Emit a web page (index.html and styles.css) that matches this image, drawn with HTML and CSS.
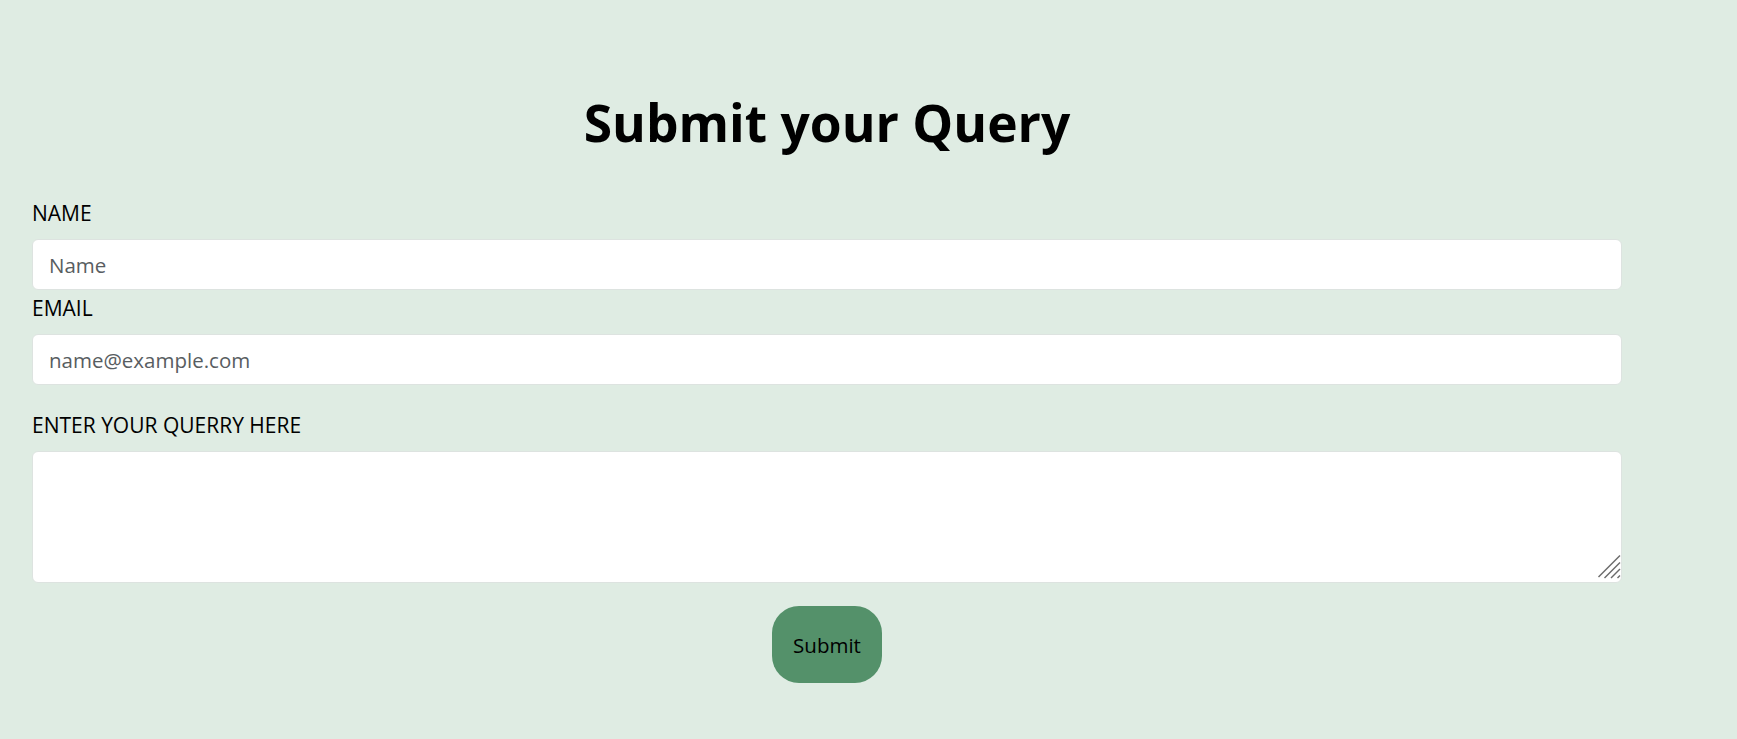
FILE: index.html
```html
<!DOCTYPE html>
<html lang="en">
<head>
<meta charset="utf-8">
<title>Submit your Query</title>
<link rel="stylesheet" href="styles.css">
</head>
<body>
<main class="page">
  <h1 class="title">Submit your Query</h1>
  <form class="query-form">
    <label class="field-label" for="name">NAME</label>
    <input class="field-input" id="name" type="text" placeholder="Name">
    <label class="field-label" for="email">EMAIL</label>
    <input class="field-input" id="email" type="email" placeholder="name@example.com">
    <label class="field-label field-label--area" for="query">ENTER YOUR QUERRY HERE</label>
    <div class="area-wrap">
      <textarea class="field-area" id="query"></textarea>
      <svg class="grip" width="24" height="30" viewBox="0 0 24 30" aria-hidden="true">
        <g stroke="#6a6a6a" stroke-width="1.5" fill="none">
          <line x1="0.5" y1="24" x2="22" y2="2.5"/>
          <line x1="6.5" y1="25" x2="22" y2="9.5"/>
          <line x1="13" y1="25" x2="22" y2="16"/>
          <line x1="19.5" y1="25" x2="22" y2="22.5"/>
        </g>
      </svg>
    </div>
    <div class="actions">
      <button class="submit-btn" type="submit">Submit</button>
    </div>
  </form>
</main>
</body>
</html>
```
FILE: styles.css
```css
html, body {
  margin: 0;
  padding: 0;
}
body {
  background: #dfece3;
  font-family: "Open Sans", "Noto Sans", sans-serif;
  color: #000;
}
.page {
  padding: 91px 115px 40px 32px;
}
.title {
  margin: 0 0 46px;
  text-align: center;
  font-size: 51.5px;
  font-weight: 700;
  line-height: 62px;
}
.query-form {
  display: flex;
  flex-direction: column;
}
.field-label {
  font-size: 21px;
  line-height: 28px;
  margin-bottom: 12px;
}
.field-label--area {
  margin-top: 22px;
}
.field-input {
  box-sizing: border-box;
  height: 51px;
  width: 100%;
  border: 1px solid #dde3e0;
  border-radius: 6px;
  background: #fff;
  padding: 0 16px;
  font-family: inherit;
  font-size: 20.5px;
  color: #212529;
  outline: none;
  margin: 0 0 4px;
}
.field-input::placeholder {
  color: #585d61;
}
.area-wrap {
  position: relative;
  display: flex;
}
.field-area {
  box-sizing: border-box;
  flex: 1;
  height: 132px;
  margin: 0;
  border: 1px solid #dde3e0;
  border-radius: 6px;
  background: #fff;
  font-family: inherit;
  font-size: 20.5px;
  outline: none;
  resize: none;
}
.grip {
  position: absolute;
  right: 0;
  bottom: 0;
  pointer-events: none;
}
.actions {
  display: flex;
  justify-content: center;
  margin-top: 23px;
}
.submit-btn {
  width: 110px;
  height: 77px;
  padding: 0;
  border: none;
  border-radius: 27px;
  background: #54916a;
  color: #000;
  font-family: inherit;
  font-size: 20.5px;
  cursor: pointer;
}
```
